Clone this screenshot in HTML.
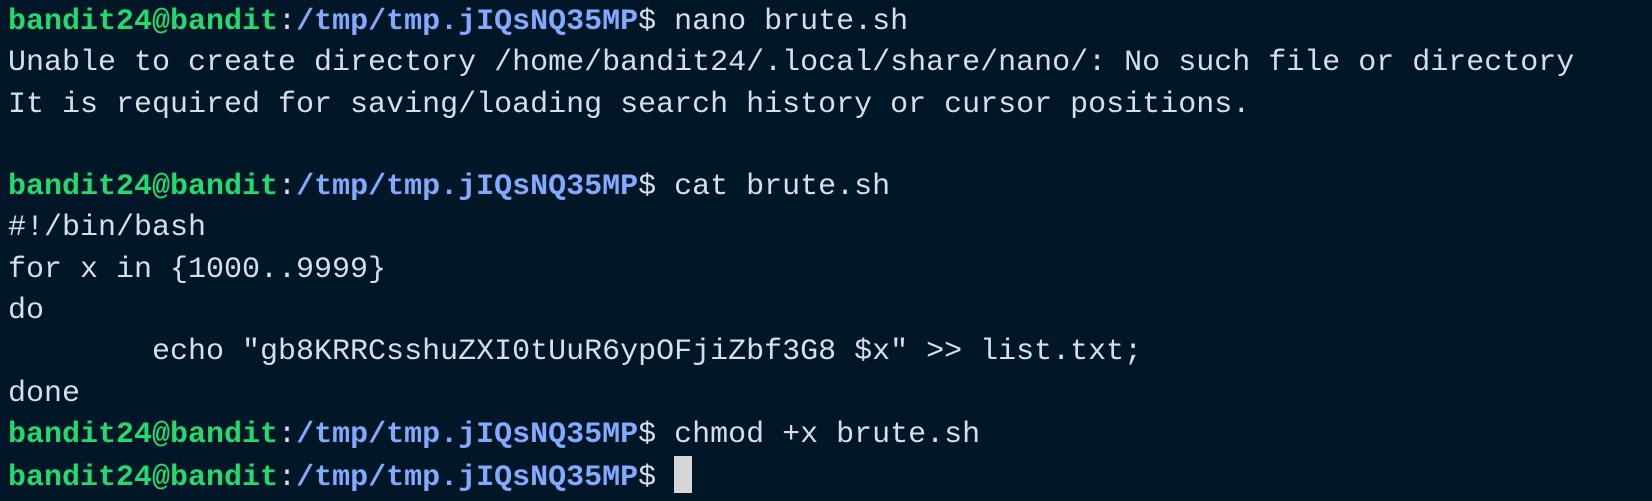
<!DOCTYPE html>
<html><head><meta charset="utf-8"><style>
html,body{margin:0;padding:0;background:#011627;width:1652px;height:501px;overflow:hidden}
pre{margin:0;padding:2px 0 0 8px;font-family:"Liberation Mono",monospace;font-size:30px;line-height:41.3px;color:#d6deeb;white-space:pre}
.g{color:#22da6e;font-weight:bold}.b{color:#82aaff;font-weight:bold}
.c{display:inline-block;width:18px;height:37px;background:#d6d6d6;vertical-align:-8px}
</style></head><body><pre><span class="g">bandit24@bandit</span>:<span class="b">/tmp/tmp.jIQsNQ35MP</span>$ nano brute.sh
Unable to create directory /home/bandit24/.local/share/nano/: No such file or directory
It is required for saving/loading search history or cursor positions.

<span class="g">bandit24@bandit</span>:<span class="b">/tmp/tmp.jIQsNQ35MP</span>$ cat brute.sh
#!/bin/bash
for x in {1000..9999}
do
        echo "gb8KRRCsshuZXI0tUuR6ypOFjiZbf3G8 $x" >> list.txt;
done
<span class="g">bandit24@bandit</span>:<span class="b">/tmp/tmp.jIQsNQ35MP</span>$ chmod +x brute.sh
<span class="g">bandit24@bandit</span>:<span class="b">/tmp/tmp.jIQsNQ35MP</span>$ <span class="c"></span></pre></body></html>
